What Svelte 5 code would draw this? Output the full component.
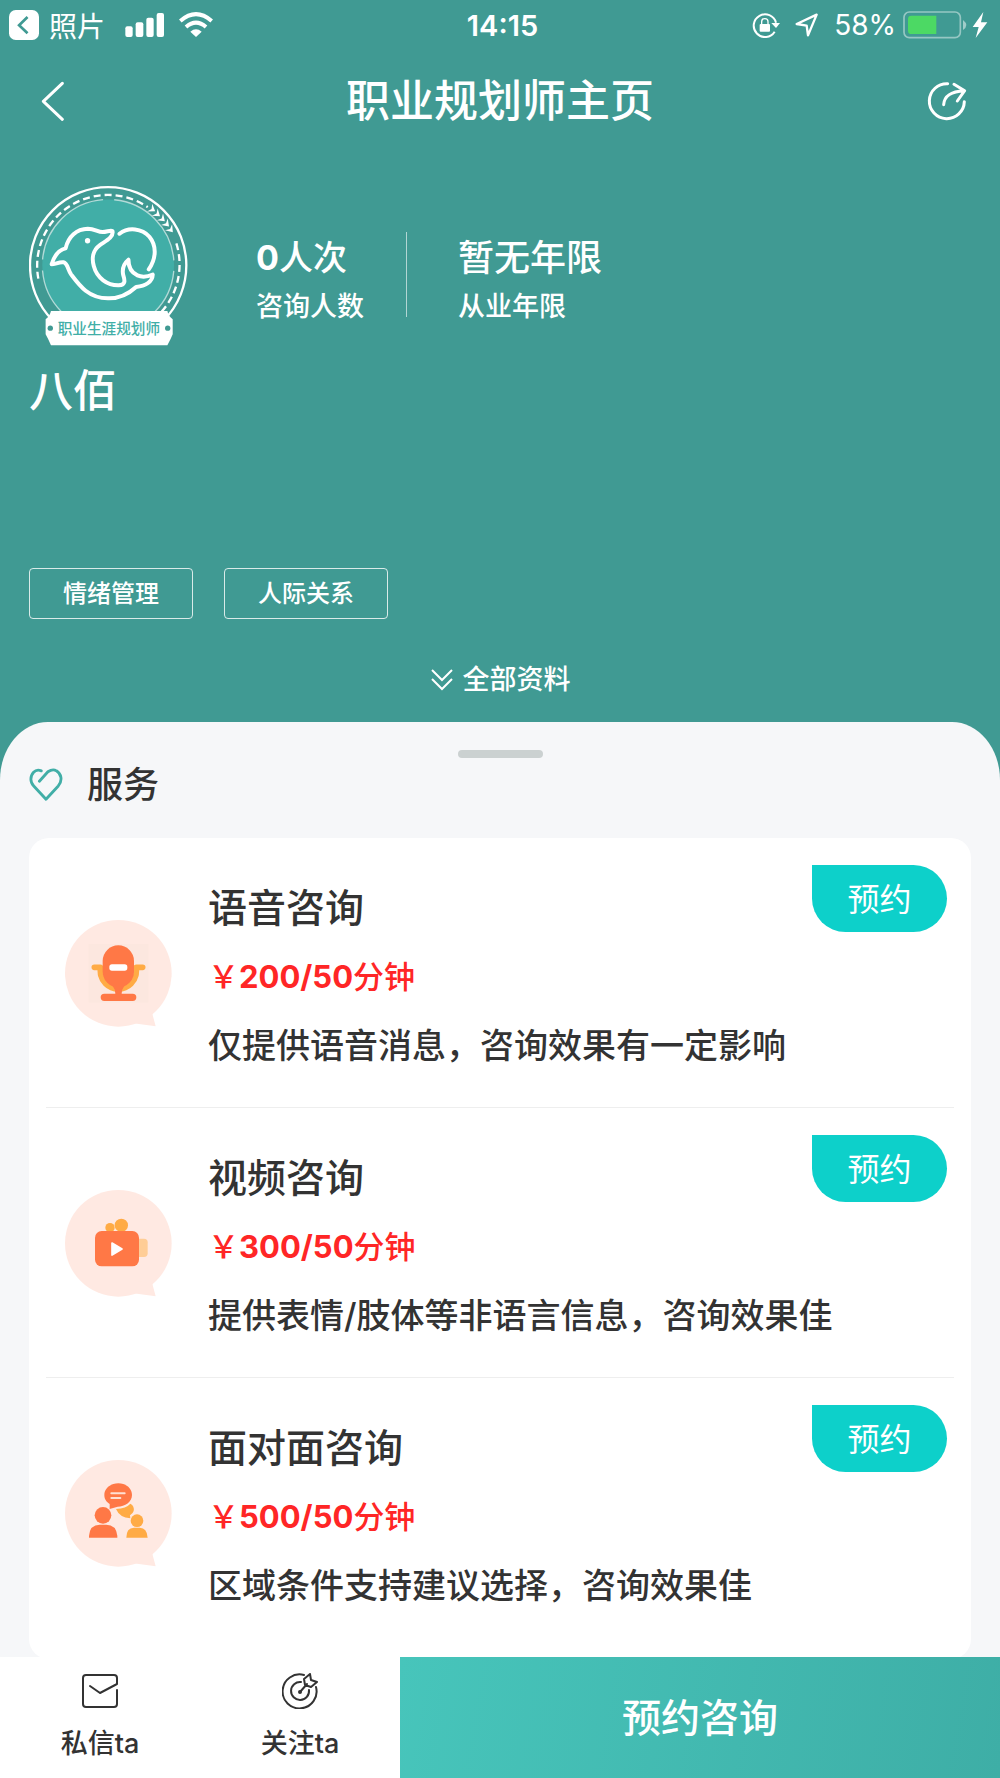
<script>
    const tags = ['情绪管理', '人际关系'];

    const services = [
        { type: 'voice', name: '语音咨询', price: '200/50', desc: '仅提供语音消息，咨询效果有一定影响' },
        { type: 'video', name: '视频咨询', price: '300/50', desc: '提供表情/肢体等非语言信息，咨询效果佳' },
        { type: 'face', name: '面对面咨询', price: '500/50', desc: '区域条件支持建议选择，咨询效果佳' }
    ];

    // Arrow heads on the badge's dashed ring: x, y, angle
    const arrows = [
        [398, 103, 34],
        [413, 117, 38],
        [428, 132, 42],
        [441, 147, 46],
        [453, 164, 50]
    ];

    let showAll = false;
    let following = false;
</script>

<div class="page">
    <header>
        <div class="status-bar">
            <div class="status-left">
                <svg width="30" height="30" viewBox="28 33 89 89">
                    <rect x="28" y="33" width="89" height="89" rx="20" fill="#fff" />
                    <path d="M83 54L58 78L83 102" fill="none" stroke="#409a93" stroke-width="8" />
                </svg>
                <span class="from-app">照片</span>
                <svg class="signal" width="40" height="26" viewBox="376 34 120 78" fill="#fff">
                    <rect x="377" y="77" width="22" height="32" rx="6" />
                    <rect x="408" y="65" width="23" height="44" rx="6" />
                    <rect x="440" y="51" width="22" height="58" rx="6" />
                    <rect x="471" y="37" width="22" height="72" rx="6" />
                </svg>
                <svg width="34" height="26" viewBox="536 34 102 78">
                    <path d="M540 61Q587 20 634 61M557 79Q587 53 617 79" fill="none" stroke="#fff" stroke-width="12" />
                    <path d="M570 93Q587 79 604 93L587 109Z" fill="#fff" />
                </svg>
            </div>
            <time>14:15</time>
            <div class="status-right">
                <svg width="28" height="26" viewBox="756 34 84 78">
                    <path d="M824 93A34 34 0 1 1 828 66" fill="none" stroke="#fff" stroke-width="6" />
                    <path d="M814 67H840L828 82Z" fill="#fff" />
                    <rect x="779" y="70" width="31" height="23" rx="3" fill="#fff" />
                    <path d="M785 72V63Q785 54 794.500 54Q804 54 804 63V72" fill="none" stroke="#fff" stroke-width="4" />
                </svg>
                <svg class="location" width="24" height="24" viewBox="886 38 72 72">
                    <path d="M951 43L925 105L921 76L891 71Z" fill="none" stroke="#fff" stroke-width="7" stroke-linejoin="round" />
                </svg>
                <span class="percent">58%</span>
                <svg width="64" height="28" viewBox="1208 31 192 84">
                    <rect x="1211" y="34" width="169" height="77" rx="16" fill="none" stroke="#fff" stroke-opacity=".45" stroke-width="5" />
                    <path d="M1308 45H1233Q1223 45 1223 55V90Q1223 100 1233 100H1308Z" fill="#4cd964" />
                    <path d="M1388 58Q1398 66 1398 73Q1398 81 1388 88Z" fill="#fff" fill-opacity=".5" />
                </svg>
                <svg class="bolt" width="16" height="26" viewBox="1418 35 48 78">
                    <path d="M1452 35L1420 80H1438L1429 113L1464 66H1445Z" fill="#fff" />
                </svg>
            </div>
        </div>

        <nav>
            <button class="icon-btn" aria-label="返回">
                <svg width="24" height="40" viewBox="123 243 72 120">
                    <path d="M187 250L130 304L187 358" fill="none" stroke="#fff" stroke-width="9" stroke-linecap="round" stroke-linejoin="round" />
                </svg>
            </button>
            <h1>职业规划师主页</h1>
            <button class="icon-btn" aria-label="分享">
                <svg width="40" height="40" viewBox="1278 242 120 120" fill="none" stroke="#fff" stroke-width="9" stroke-linecap="round" stroke-linejoin="round">
                    <path d="M1340 250A52.500 52.500 0 1 0 1390 304" />
                    <path d="M1328 313Q1330 274 1390 271M1359 252L1391 271L1369 302" />
                </svg>
            </button>
        </nav>

        <div class="profile">
            <svg class="avatar" width="159" height="160" viewBox="27 33 478 480">
                <circle cx="265" cy="271" r="235" fill="#409a93" stroke="#fff" stroke-width="7" />
                <circle cx="265" cy="271" r="198" fill="#41aea7" />
                <circle cx="265" cy="271" r="198" fill="none" stroke="#fff" stroke-opacity=".6" stroke-width="4" stroke-dasharray="277 34" stroke-dashoffset="-17" />
                <path d="M55 311A213 213 0 0 1 384 96M470 205A213 213 0 0 1 425 411" fill="none" stroke="#fff" stroke-width="7" stroke-dasharray="21 12" />
                {#each arrows as [x, y, angle]}
                    <path d="M-10 -14L10 0L-10 14L-3 0Z" transform="translate({x} {y}) rotate({angle})" fill="#fff" />
                {/each}
                <g fill="none" stroke="#fff" stroke-width="12" stroke-linecap="round" stroke-linejoin="round">
                    <path d="M95 268C104 239 119 224 137 220C145 184 170 162 204 161C224 161 234 171 248 171C261 171 272 164 278 168C282 187 257 198 240 210C219 225 215 250 222 274C231 309 263 332 297 331C319 330 315 315 310 299C306 278 314 264 326 254C326 276 335 293 353 301C368 308 384 305 399 299C398 321 377 333 349 336C324 359 293 371 264 370C206 370 178 331 154 299C144 285 143 264 131 262C118 260 106 268 95 268Z" />
                    <path d="M299 176C326 155 367 160 389 185C412 213 409 252 387 283" />
                </g>
                <circle cx="203" cy="197" r="8" fill="#fff" />
                <path d="M93 408H443Q446 423 459 433V478Q453 493 443 511H93Q85 492 77 478V433Q90 423 93 408Z" fill="#fff" />
                <circle cx="91" cy="460" r="8" fill="#409a93" />
                <circle cx="444" cy="460" r="8" fill="#409a93" />
                <text x="267" y="476" text-anchor="middle" font-size="44" font-weight="500" fill="#41aea7">职业生涯规划师</text>
            </svg>
            <div class="stats">
                <div class="stat">
                    <p class="count"><b>0</b>人次</p>
                    <p class="label">咨询人数</p>
                </div>
                <div class="stat">
                    <p class="years">暂无年限</p>
                    <p class="label">从业年限</p>
                </div>
            </div>
        </div>

        <h2 class="name">八佰</h2>

        <ul class="tags">
            {#each tags as tag}
                <li>{tag}</li>
            {/each}
        </ul>

        <button class="more" aria-expanded={showAll} on:click={() => (showAll = !showAll)}>
            <svg width="24" height="24" viewBox="0 0 24 24" fill="none" stroke="#fff" stroke-width="2">
                <path d="M2 2L12 12L22 2M2 11L12 21L22 11" />
            </svg>
            全部资料
        </button>
    </header>

    <main>
        <div class="handle"></div>
        <h2 class="section-title">
            <svg width="34" height="34" viewBox="0 0 36 36" fill="none" stroke="#41aea7" stroke-width="3" stroke-linecap="round" stroke-linejoin="round">
                <path d="M13 3C6 0 2 7 2 12C2 15 3 17 5 19L18 33L31 19C36 13 34 6 29 3C26 1 23 2 20 4L11 14" />
            </svg>
            服务
        </h2>

        <ul class="services">
            {#each services as service}
                <li>
                    <svg class="bubble" width="107" height="107" viewBox="45 60 321 321">
                        <circle cx="205" cy="220" r="160" fill="#ffe9e2" />
                        <path d="M307 341L317 379L250 370L240 330Z" fill="#ffe9e2" />
                        {#if service.type === 'voice'}
                            <rect x="116" y="132" width="179" height="176" fill="#fce7df" />
                            <path d="M133 202H151V213A54 54 0 0 0 259 213V202H278" fill="none" stroke="#ffab45" stroke-width="17" stroke-linecap="round" stroke-linejoin="round" />
                            <rect x="158" y="136" width="94" height="126" rx="47" fill="#ff7846" />
                            <path d="M188 258H223Q214 270 215 281H248A11 11 0 0 1 248 303H163A11 11 0 0 1 163 281H196Q197 270 188 258Z" fill="#ff7846" />
                            <rect x="178" y="193" width="54" height="19" rx="8" fill="#fff" />
                        {:else if service.type === 'video'}
                            <rect x="250" y="206" width="43" height="55" rx="11" fill="#ffcd96" />
                            <circle cx="180" cy="173" r="14" fill="#ffab45" />
                            <circle cx="214" cy="166" r="20" fill="#ffab45" />
                            <rect x="135" y="183" width="132" height="106" rx="20" fill="#ff7846" />
                            <path d="M186 219L216 237L186 255Z" fill="#fff" stroke="#fff" stroke-width="5" stroke-linejoin="round" />
                        {:else}
                            <path d="M198 207Q229 205 241 191Q254 198 251 213Q249 220 240 226L241 235Q209 233 198 207Z" fill="#ffab45" />
                            <path d="M205 130C229 130 246 145 246 165C246 186 225 200 203 200L179 207V192C167 184 163 176 163 165C163 145 181 130 205 130Z" fill="#ff7846" />
                            <path d="M184 160H224M184 174H211" stroke="#ffe0d4" stroke-width="6" stroke-linecap="round" />
                            <circle cx="159" cy="226" r="25" fill="#ff7846" />
                            <path d="M117 293V287Q120 254 149 254H169Q198 254 202 287V293Z" fill="#ff7846" />
                            <circle cx="261" cy="242" r="19" fill="#ffab45" />
                            <path d="M229 293Q229 263 252 263H269Q291 263 293 293Z" fill="#ffab45" />
                        {/if}
                    </svg>
                    <div class="info">
                        <h3>{service.name}</h3>
                        <p class="price">￥<b>{service.price}</b>分钟</p>
                        <p class="desc">{service.desc}</p>
                    </div>
                    <button class="book">预约</button>
                </li>
            {/each}
        </ul>
    </main>

    <footer>
        <button class="action">
            <svg width="36" height="36" viewBox="0 0 36 36" fill="none" stroke="#333" stroke-width="2" stroke-linecap="round" stroke-linejoin="round">
                <path d="M8 13L18 20L35 11V5Q35 2 32 2H4Q1 2 1 5V31Q1 34 4 34H32Q35 34 35 31V17" />
            </svg>
            私信ta
        </button>
        <button class="action" aria-pressed={following} on:click={() => (following = !following)}>
            <svg width="36" height="36" viewBox="0 0 36 36" fill="none" stroke="#333" stroke-width="2" stroke-linecap="round" stroke-linejoin="round">
                <path d="M22 2A17 17 0 1 0 34 14" />
                <path d="M19 9A9 9 0 1 0 27 17" />
                <path d="M18 19L25 11M23 12L22 6L28 1L29 7L35 9L29 14L23 12" />
                <circle cx="18" cy="19" r="1" fill="#333" />
            </svg>
            关注ta
        </button>
        <button class="submit">预约咨询</button>
    </footer>
</div>

<style>
    :global(body) {
        margin: 0;
        background: #409a93;
    }

    .page {
        display: flex;
        flex-direction: column;
        height: 100vh;
        background: #409a93;
        color: #333;
        font-family: Inter, "Noto Sans CJK SC", sans-serif;
        font-weight: 500;
    }

    h1, h2, h3, p, ul {
        margin: 0;
        padding: 0;
        font-weight: 500;
    }

    ul {
        list-style: none;
    }

    svg {
        display: block;
        flex: none;
    }

    button {
        border: 0;
        padding: 0;
        background: none;
        color: inherit;
        font: inherit;
        cursor: pointer;
    }

    header {
        flex: none;
        color: #fff;
    }

    .status-bar {
        display: grid;
        grid-template-columns: 1fr auto 1fr;
        align-items: center;
        height: 50px;
        padding: 0 12px 0 9px;
        font-size: 28px;
    }

    .status-left, .status-right {
        display: flex;
        align-items: center;
    }

    .status-right {
        justify-content: flex-end;
    }

    .from-app {
        margin: 0 20px 0 10px;
        font-weight: 400;
    }

    .signal {
        margin-right: 14px;
    }

    time {
        padding-left: 8px;
        font-size: 29px;
        font-weight: 600;
    }

    .location {
        margin: 0 15px;
    }

    .percent {
        margin-right: 7px;
        font-weight: 400;
    }

    .bolt {
        margin-left: 5px;
    }

    nav {
        display: flex;
        align-items: center;
        justify-content: space-between;
        height: 102px;
        padding: 0 33px;
    }

    .icon-btn {
        display: flex;
        justify-content: center;
        width: 40px;
    }

    h1 {
        font-size: 44px;
        line-height: 60px;
    }

    .profile {
        display: flex;
        padding: 34px 29px 0;
    }

    .avatar {
        font-family: "Noto Sans CJK SC", sans-serif;
    }

    .stats {
        display: flex;
        align-items: flex-start;
        padding: 46px 0 0 68px;
    }

    .stat {
        height: 85px;
    }

    .stat:first-child {
        width: 150px;
        border-right: 1px solid rgba(255, 255, 255, 0.6);
    }

    .stat:last-child {
        padding-left: 51px;
    }

    .count, .years {
        font-size: 34px;
        line-height: 52px;
    }

    .years {
        font-size: 36px;
    }

    .label {
        font-size: 27px;
        line-height: 46px;
    }

    .name {
        padding: 15px 29px 0;
        font-size: 44px;
        line-height: 60px;
    }

    .tags {
        display: flex;
        gap: 31px;
        padding: 147px 29px 0;
    }

    .tags li {
        padding: 0 33px;
        border: 1px solid rgba(255, 255, 255, 0.8);
        border-radius: 4px;
        font-size: 24px;
        line-height: 49px;
    }

    .more {
        display: flex;
        align-items: center;
        gap: 9px;
        margin: 41px auto 22px;
        font-size: 27px;
        line-height: 40px;
    }

    main {
        flex: 1;
        min-height: 0;
        overflow-y: auto;
        scrollbar-width: none;
        padding: 28px 29px 0;
        border-radius: 48px 48px 0 0 / 58px 58px 0 0;
        background: #f6f7f9;
    }

    .handle {
        width: 85px;
        height: 8px;
        margin: 0 auto;
        border-radius: 4px;
        background: #cbd1d1;
    }

    .section-title {
        display: flex;
        align-items: center;
        gap: 24px;
        font-size: 36px;
        line-height: 54px;
    }

    .services {
        margin-top: 26px;
        padding: 0 17px 12px;
        border-radius: 20px;
        background: #fff;
    }

    .services li {
        display: flex;
        align-items: flex-start;
        padding: 40px 7px 31px 19px;
        border-bottom: 1px solid #eee;
    }

    .services li:last-child {
        border-bottom: 0;
    }

    .bubble {
        margin: 42px 36px 0 0;
    }

    .info {
        display: flex;
        flex: 1;
        flex-direction: column;
        gap: 9px;
        min-width: 0;
        line-height: 60px;
        white-space: nowrap;
    }

    h3 {
        font-size: 39px;
    }

    .price {
        color: #ff2626;
        font-size: 31px;
    }

    .desc {
        font-size: 34px;
    }

    .book {
        flex: none;
        width: 135px;
        height: 67px;
        margin-top: -13px;
        padding-bottom: 4px;
        border-radius: 0 34px 34px 34px;
        background: #0dd0ca;
        color: #fff;
        font-size: 32px;
        font-weight: 400;
    }

    footer {
        display: flex;
        flex: none;
        height: 121px;
        background: #fff;
    }

    .action {
        display: flex;
        flex: 1;
        flex-direction: column;
        align-items: center;
        gap: 15px;
        padding-top: 16px;
        font-size: 27px;
        line-height: 40px;
    }

    .submit {
        flex: 3;
        padding-bottom: 6px;
        background: linear-gradient(100deg, #47c5bb, #3eaea6);
        color: #fff;
        font-size: 39px;
    }
</style>
